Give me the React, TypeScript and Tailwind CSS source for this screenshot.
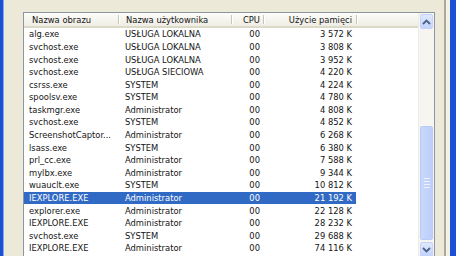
import React from 'react'

type Row = [string, string, string, string]

const rows: Row[] = [
  ['alg.exe', 'USŁUGA LOKALNA', '00', '3 572 K'],
  ['svchost.exe', 'USŁUGA LOKALNA', '00', '3 808 K'],
  ['svchost.exe', 'USŁUGA LOKALNA', '00', '3 952 K'],
  ['svchost.exe', 'USŁUGA SIECIOWA', '00', '4 220 K'],
  ['csrss.exe', 'SYSTEM', '00', '4 224 K'],
  ['spoolsv.exe', 'SYSTEM', '00', '4 780 K'],
  ['taskmgr.exe', 'Administrator', '00', '4 808 K'],
  ['svchost.exe', 'SYSTEM', '00', '4 852 K'],
  ['ScreenshotCaptor...', 'Administrator', '00', '6 268 K'],
  ['lsass.exe', 'SYSTEM', '00', '6 380 K'],
  ['prl_cc.exe', 'Administrator', '00', '7 588 K'],
  ['mylbx.exe', 'Administrator', '00', '9 344 K'],
  ['wuauclt.exe', 'SYSTEM', '00', '10 812 K'],
  ['IEXPLORE.EXE', 'Administrator', '00', '21 192 K'],
  ['explorer.exe', 'Administrator', '00', '22 128 K'],
  ['IEXPLORE.EXE', 'Administrator', '00', '28 232 K'],
  ['svchost.exe', 'SYSTEM', '00', '29 688 K'],
  ['IEXPLORE.EXE', 'Administrator', '00', '74 116 K'],
]

const SELECTED = 13

function Sep() {
  return <div className="w-[2px] h-[9px] border-l border-[#c9c6b4] border-r border-r-white" />
}

function Chevron({ up }: { up?: boolean }) {
  return (
    <svg width="9" height="6" viewBox="0 0 9 6">
      <polyline
        points={up ? '1,5 4.5,1.5 8,5' : '1,1 4.5,4.5 8,1'}
        fill="none"
        stroke="#4d6185"
        strokeWidth="1.8"
      />
    </svg>
  )
}

export default function App() {
  return (
    <div
      className="w-[456px] h-[256px] overflow-hidden flex bg-[#ece9d8] text-[#141414]"
      style={{ fontFamily: '"DejaVu Sans Condensed", "DejaVu Sans", sans-serif' }}
    >
      <div className="w-[3px] bg-[#1b4fd6]" />
      <div className="w-px bg-[#8aa6e8]" />
      <div className="flex flex-col pl-[19px] pt-[12px]">
        <div className="w-[412px] h-[250px] border border-[#8c95a3] bg-white flex">
          <div className="flex-1 flex flex-col">
            <div className="h-[15px] flex items-center text-[9.3px] bg-gradient-to-b from-[#fcfcfa] to-[#efede4] border-b-2 border-[#dcd9c8]">
              <div className="w-[94px] pl-[8px]">Nazwa obrazu</div>
              <Sep />
              <div className="w-[111px] pl-[6px]">Nazwa użytkownika</div>
              <Sep />
              <div className="w-[30px] pr-[3px] text-right">CPU</div>
              <Sep />
              <div className="w-[91px] pr-[4px] text-right">Użycie pamięci</div>
              <Sep />
            </div>
            <div className="flex flex-col text-[9.3px]">
              {rows.map((r, i) => (
                <div key={i} className="h-[12.6px] flex items-center">
                  <div
                    className={
                      'w-[332px] h-full flex items-center whitespace-nowrap ' +
                      (i === SELECTED ? 'bg-[#316ac5] text-white' : '')
                    }
                  >
                    <div className="w-[94px] pl-[5px]">{r[0]}</div>
                    <div className="w-[113px] pl-[7px]">{r[1]}</div>
                    <div className="w-[32px] pr-[3px] text-right">{r[2]}</div>
                    <div className="w-[93px] pr-[4px] text-right">{r[3]}</div>
                  </div>
                </div>
              ))}
            </div>
          </div>
          <div className="w-[16px] flex flex-col bg-[#f6f5f0] border-l border-[#eeede5]">
            <div className="h-[15px] mx-px mt-px rounded-[2px] border border-[#c3d3fd] bg-gradient-to-b from-[#e0e8fe] to-[#c2d3fc] flex items-center justify-center">
              <Chevron up />
            </div>
            <div className="h-[97px]" />
            <div className="h-[114px] mx-px rounded-[2px] border border-[#b8cbf9] bg-gradient-to-r from-[#c9d8fc] to-[#bccffb] flex flex-col items-center justify-center gap-[2px]">
              <div className="w-[6px] h-px bg-[#eef3fe]" />
              <div className="w-[6px] h-px bg-[#eef3fe]" />
              <div className="w-[6px] h-px bg-[#eef3fe]" />
              <div className="w-[6px] h-px bg-[#eef3fe]" />
            </div>
            <div className="h-[2px]" />
            <div className="h-[15px] mx-px rounded-[2px] border border-[#c3d3fd] bg-gradient-to-b from-[#e0e8fe] to-[#c2d3fc] flex items-center justify-center">
              <Chevron />
            </div>
          </div>
        </div>
      </div>
      <div className="w-[9px]" />
      <div className="w-[2px] bg-[#aca899]" />
      <div className="w-[4px] bg-[#f4f2e8]" />
      <div className="flex-1 bg-[#1b4fd6]" />
    </div>
  )
}
